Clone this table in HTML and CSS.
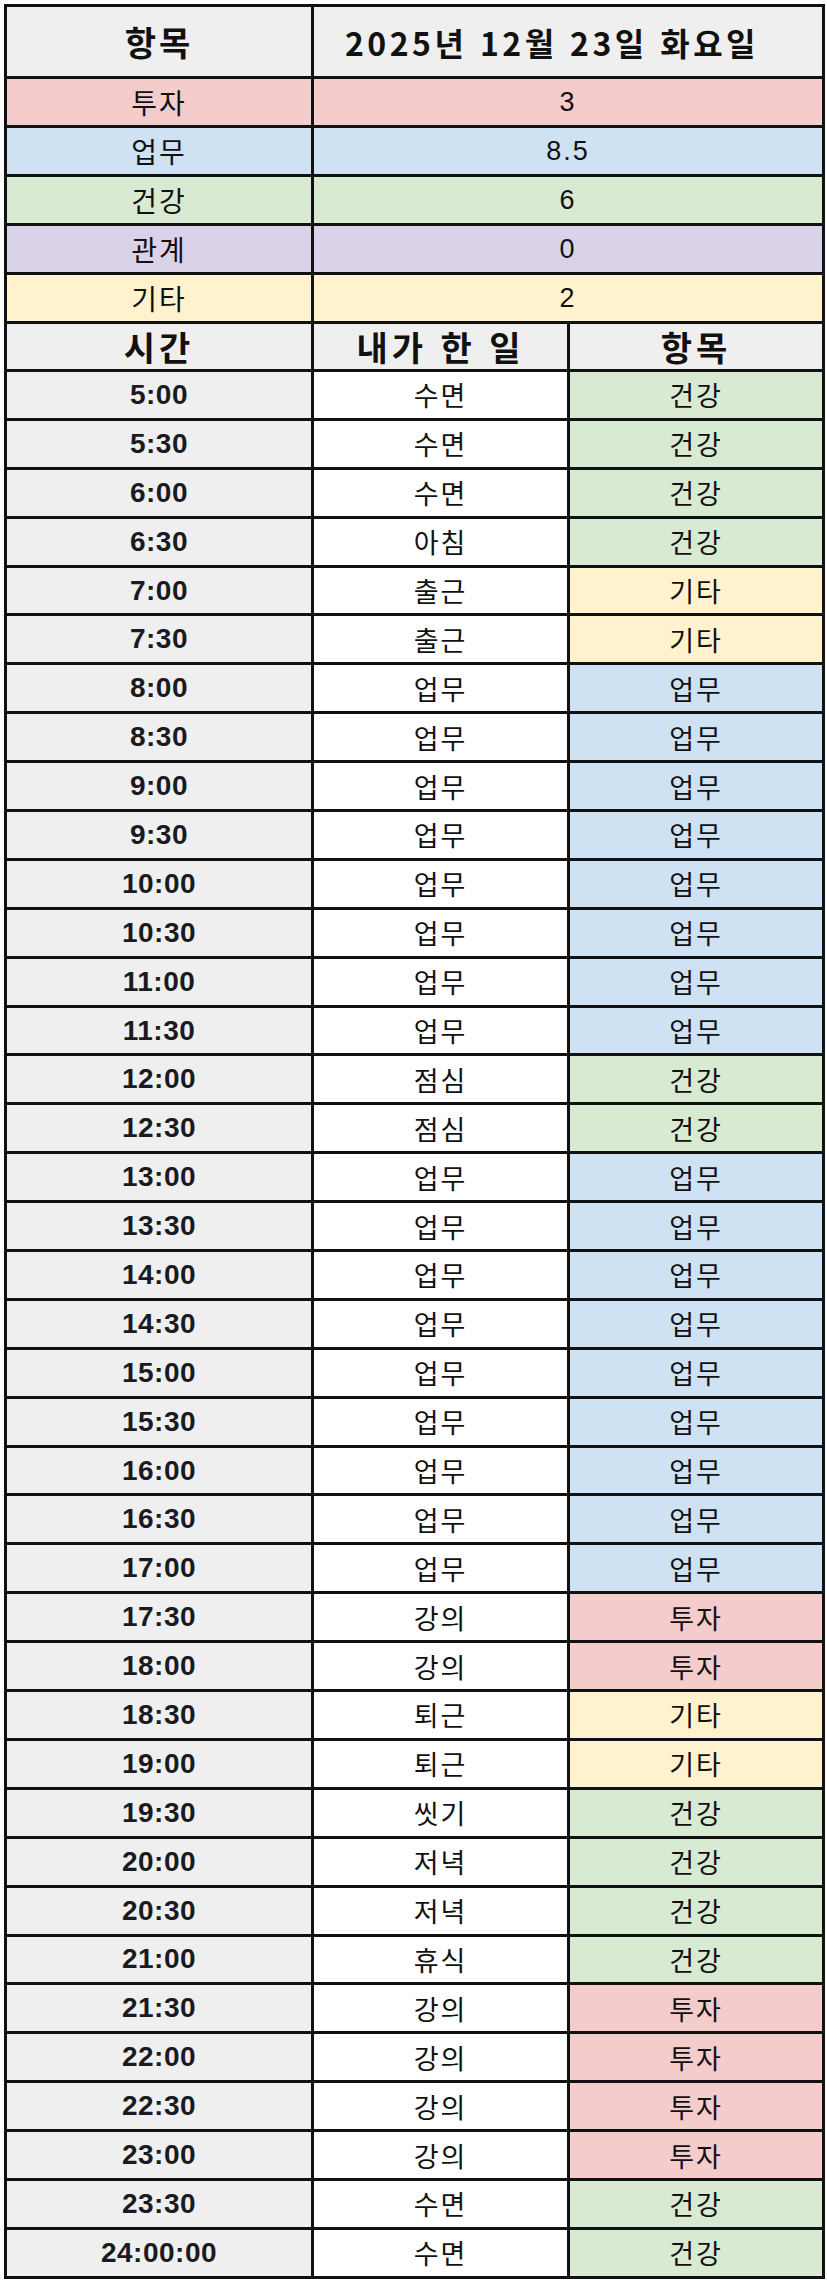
FILE: index.html
```html
<!DOCTYPE html>
<html lang="ko">
<head>
<meta charset="utf-8">
<title>하루 기록</title>
<link rel="stylesheet" href="styles.css">
</head>
<body>
<table class="sheet">
  <colgroup>
    <col class="c1"><col class="c2"><col class="c3">
  </colgroup>
  <tbody>
    <tr class="head-row">
      <th class="hd">항목</th>
      <th class="hd date" colspan="2">2025년 12월 23일 화요일</th>
    </tr>
    <tr class="sum-row invest"><td class="lbl">투자</td><td class="val" colspan="2">3</td></tr>
    <tr class="sum-row work"><td class="lbl">업무</td><td class="val" colspan="2">8.5</td></tr>
    <tr class="sum-row health"><td class="lbl">건강</td><td class="val" colspan="2">6</td></tr>
    <tr class="sum-row rel"><td class="lbl">관계</td><td class="val" colspan="2">0</td></tr>
    <tr class="sum-row etc"><td class="lbl">기타</td><td class="val" colspan="2">2</td></tr>
    <tr class="col-head">
      <th class="hd2">시간</th><th class="hd2">내가 한 일</th><th class="hd2">항목</th>
    </tr>
    <tr class="d"><td class="t">5:00</td><td class="a">수면</td><td class="k health">건강</td></tr>
    <tr class="d"><td class="t">5:30</td><td class="a">수면</td><td class="k health">건강</td></tr>
    <tr class="d"><td class="t">6:00</td><td class="a">수면</td><td class="k health">건강</td></tr>
    <tr class="d"><td class="t">6:30</td><td class="a">아침</td><td class="k health">건강</td></tr>
    <tr class="d"><td class="t">7:00</td><td class="a">출근</td><td class="k etc">기타</td></tr>
    <tr class="d"><td class="t">7:30</td><td class="a">출근</td><td class="k etc">기타</td></tr>
    <tr class="d"><td class="t">8:00</td><td class="a">업무</td><td class="k work">업무</td></tr>
    <tr class="d"><td class="t">8:30</td><td class="a">업무</td><td class="k work">업무</td></tr>
    <tr class="d"><td class="t">9:00</td><td class="a">업무</td><td class="k work">업무</td></tr>
    <tr class="d"><td class="t">9:30</td><td class="a">업무</td><td class="k work">업무</td></tr>
    <tr class="d"><td class="t">10:00</td><td class="a">업무</td><td class="k work">업무</td></tr>
    <tr class="d"><td class="t">10:30</td><td class="a">업무</td><td class="k work">업무</td></tr>
    <tr class="d"><td class="t">11:00</td><td class="a">업무</td><td class="k work">업무</td></tr>
    <tr class="d"><td class="t">11:30</td><td class="a">업무</td><td class="k work">업무</td></tr>
    <tr class="d"><td class="t">12:00</td><td class="a">점심</td><td class="k health">건강</td></tr>
    <tr class="d"><td class="t">12:30</td><td class="a">점심</td><td class="k health">건강</td></tr>
    <tr class="d"><td class="t">13:00</td><td class="a">업무</td><td class="k work">업무</td></tr>
    <tr class="d"><td class="t">13:30</td><td class="a">업무</td><td class="k work">업무</td></tr>
    <tr class="d"><td class="t">14:00</td><td class="a">업무</td><td class="k work">업무</td></tr>
    <tr class="d"><td class="t">14:30</td><td class="a">업무</td><td class="k work">업무</td></tr>
    <tr class="d"><td class="t">15:00</td><td class="a">업무</td><td class="k work">업무</td></tr>
    <tr class="d"><td class="t">15:30</td><td class="a">업무</td><td class="k work">업무</td></tr>
    <tr class="d"><td class="t">16:00</td><td class="a">업무</td><td class="k work">업무</td></tr>
    <tr class="d"><td class="t">16:30</td><td class="a">업무</td><td class="k work">업무</td></tr>
    <tr class="d"><td class="t">17:00</td><td class="a">업무</td><td class="k work">업무</td></tr>
    <tr class="d"><td class="t">17:30</td><td class="a">강의</td><td class="k invest">투자</td></tr>
    <tr class="d"><td class="t">18:00</td><td class="a">강의</td><td class="k invest">투자</td></tr>
    <tr class="d"><td class="t">18:30</td><td class="a">퇴근</td><td class="k etc">기타</td></tr>
    <tr class="d"><td class="t">19:00</td><td class="a">퇴근</td><td class="k etc">기타</td></tr>
    <tr class="d"><td class="t">19:30</td><td class="a">씻기</td><td class="k health">건강</td></tr>
    <tr class="d"><td class="t">20:00</td><td class="a">저녁</td><td class="k health">건강</td></tr>
    <tr class="d"><td class="t">20:30</td><td class="a">저녁</td><td class="k health">건강</td></tr>
    <tr class="d"><td class="t">21:00</td><td class="a">휴식</td><td class="k health">건강</td></tr>
    <tr class="d"><td class="t">21:30</td><td class="a">강의</td><td class="k invest">투자</td></tr>
    <tr class="d"><td class="t">22:00</td><td class="a">강의</td><td class="k invest">투자</td></tr>
    <tr class="d"><td class="t">22:30</td><td class="a">강의</td><td class="k invest">투자</td></tr>
    <tr class="d"><td class="t">23:00</td><td class="a">강의</td><td class="k invest">투자</td></tr>
    <tr class="d"><td class="t">23:30</td><td class="a">수면</td><td class="k health">건강</td></tr>
    <tr class="d"><td class="t">24:00:00</td><td class="a">수면</td><td class="k health">건강</td></tr>
  </tbody>
</table>
</body>
</html>
```

FILE: styles.css
```css
html, body {
  margin: 0;
  padding: 0;
  background: #ffffff;
}

body {
  padding: 4px 0 0 4px;
  font-family: "Noto Sans CJK KR", "Noto Sans", sans-serif;
  color: #111111;
}

.sheet {
  border-collapse: collapse;
  table-layout: fixed;
  width: 818px;
}

.c1 { width: 307px; }
.c2 { width: 256px; }
.c3 { width: 255px; }

.sheet th,
.sheet td {
  border: 3px solid #111111;
  padding: 0;
  text-align: center;
  vertical-align: middle;
  line-height: 1;
  overflow: hidden;
  white-space: nowrap;
}

/* header */
.head-row { height: 72px; }
.hd {
  background: #efefef;
  font-weight: 700;
  font-size: 34px;
  letter-spacing: 3px;
  padding-left: 3px;
}
.hd.date {
  font-size: 32px;
  letter-spacing: 3.5px;
  padding-left: 0;
  padding-right: 32px;
}

/* summary rows */
.sum-row { height: 49px; }
.lbl {
  font-size: 28px;
  font-weight: 400;
  letter-spacing: 2px;
  padding-left: 2px;
  padding-bottom: 4px;
}
.val {
  font-family: "Liberation Sans", Arial, sans-serif;
  font-size: 27px;
  letter-spacing: 2px;
  padding-left: 2px;
  padding-top: 8px;
}

.invest { background: #f4cccc; }
.work { background: #cfe2f3; }
.health { background: #d9ead3; }
.rel { background: #d9d2e9; }
.etc { background: #fff2cc; }

/* column header */
.col-head { height: 48px; }
.hd2 {
  background: #efefef;
  font-weight: 700;
  font-size: 34px;
  letter-spacing: 4px;
  padding-left: 4px;
}

/* data rows */
.d { height: 48.9px; }
.t {
  background: #efefef;
  font-family: "Liberation Sans", Arial, sans-serif;
  font-weight: 700;
  font-size: 28px;
  letter-spacing: 0.5px;
  color: #1a1a22;
}
.a {
  background: #ffffff;
  font-size: 27px;
  letter-spacing: 2px;
  padding-left: 2px;
}
.k {
  font-size: 27px;
  letter-spacing: 2px;
  padding-left: 2px;
}
```
